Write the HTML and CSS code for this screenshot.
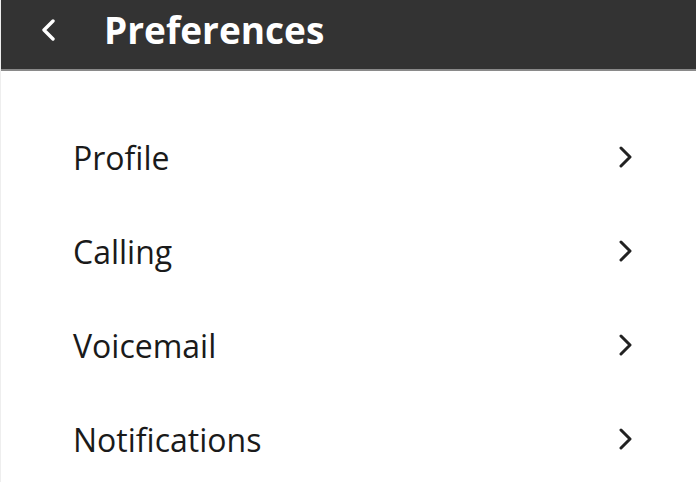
FILE: index.html
```html
<!DOCTYPE html>
<html>
<head>
<meta charset="utf-8">
<link rel="stylesheet" href="styles.css">
</head>
<body>
<header class="topbar">
  <span class="back">
    <svg width="16" height="22" viewBox="0 0 16 22"><path d="M13 2 L4 11 L13 20" fill="none" stroke="#fff" stroke-width="3.4" stroke-linecap="round" stroke-linejoin="round"/></svg>
  </span>
  <h1 class="title">Preferences</h1>
</header>
<main class="list">
  <div class="row"><span class="label">Profile</span><svg class="chev" width="16" height="22" viewBox="0 0 16 22"><path d="M3 2 L12 11 L3 20" fill="none" stroke="#222" stroke-width="3" stroke-linecap="round" stroke-linejoin="round"/></svg></div>
  <div class="row"><span class="label">Calling</span><svg class="chev" width="16" height="22" viewBox="0 0 16 22"><path d="M3 2 L12 11 L3 20" fill="none" stroke="#222" stroke-width="3" stroke-linecap="round" stroke-linejoin="round"/></svg></div>
  <div class="row"><span class="label">Voicemail</span><svg class="chev" width="16" height="22" viewBox="0 0 16 22"><path d="M3 2 L12 11 L3 20" fill="none" stroke="#222" stroke-width="3" stroke-linecap="round" stroke-linejoin="round"/></svg></div>
  <div class="row"><span class="label">Notifications</span><svg class="chev" width="16" height="22" viewBox="0 0 16 22"><path d="M3 2 L12 11 L3 20" fill="none" stroke="#222" stroke-width="3" stroke-linecap="round" stroke-linejoin="round"/></svg></div>
</main>
</body>
</html>
```
FILE: styles.css
```css
html, body { margin: 0; padding: 0; background: #fff; }
body { font-family: "Open Sans", sans-serif; width: 696px; height: 482px; overflow: hidden; border-left: 1px solid #eee; box-sizing: border-box; }
.topbar { height: 59px; padding-bottom: 10px; background: #333333; border-bottom: 2px solid #8a8a8a; display: flex; align-items: center; box-sizing: content-box; margin-left: -1px; }
.back { width: 104px; display: flex; justify-content: flex-start; padding-left: 40px; box-sizing: border-box; }
.back svg { display: block; }
.title { margin: 0; color: #fff; font-size: 37px; font-weight: 700; line-height: 1; }
.list { padding-top: 39px; }
.row { height: 94px; display: flex; align-items: center; justify-content: space-between; padding: 0 62px 0 72px; }
.label { font-size: 32px; font-weight: 500; color: #1a1a1a; }
.chev { display: block; }
```
